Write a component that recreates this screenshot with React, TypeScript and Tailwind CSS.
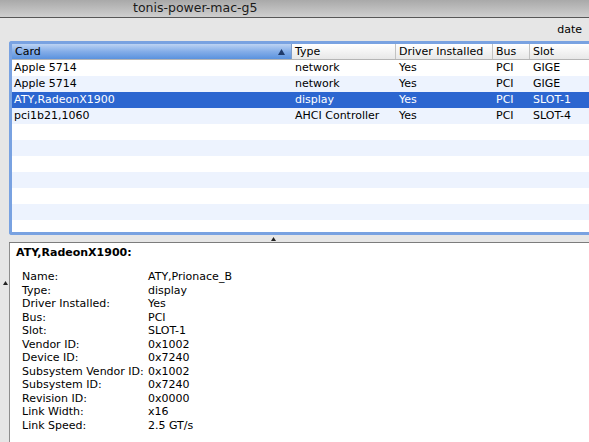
const rows = [
  { card: "Apple 5714", type: "network", drv: "Yes", bus: "PCI", slot: "GIGE" },
  { card: "Apple 5714", type: "network", drv: "Yes", bus: "PCI", slot: "GIGE" },
  { card: "ATY,RadeonX1900", type: "display", drv: "Yes", bus: "PCI", slot: "SLOT-1" },
  { card: "pci1b21,1060", type: "AHCI Controller", drv: "Yes", bus: "PCI", slot: "SLOT-4" },
];

const details: [string, string][] = [
  ["Name:", "ATY,Prionace_B"],
  ["Type:", "display"],
  ["Driver Installed:", "Yes"],
  ["Bus:", "PCI"],
  ["Slot:", "SLOT-1"],
  ["Vendor ID:", "0x1002"],
  ["Device ID:", "0x7240"],
  ["Subsystem Vendor ID:", "0x1002"],
  ["Subsystem ID:", "0x7240"],
  ["Revision ID:", "0x0000"],
  ["Link Width:", "x16"],
  ["Link Speed:", "2.5 GT/s"],
];

const cols = "grid grid-cols-[280px_104px_97px_37px_1fr]";

function Handle() {
  return (
    <svg width="5" height="5" viewBox="0 0 5 5">
      <path d="M0 5 L2.5 1 L5 5 Z" fill="#222" />
    </svg>
  );
}

export default function App() {
  return (
    <div className="w-[589px] h-[442px] overflow-hidden bg-[#e6e6e6] text-[11px] text-black font-['DejaVu_Sans',sans-serif] flex flex-col">
      {/* title bar */}
      <div className="h-[18px] shrink-0 bg-gradient-to-b from-[#a9a9a9] to-[#cfcfcf] border-b border-[#575757] pl-[133px] text-[12.5px] leading-[16px] text-[#1a1a1a]">
        tonis-power-mac-g5
      </div>
      {/* toolbar */}
      <div className="h-[23px] shrink-0 flex items-center justify-end pr-[7px] pt-[2px]">date</div>

      <div className="flex-1 flex min-h-0">
        <div className="w-[9px] shrink-0 flex flex-col">
          <div className="h-[239px]" />
          <div className="pl-[3px]"><Handle /></div>
        </div>
        <div className="flex-1 flex flex-col min-w-0">
          {/* table with focus ring */}
          <div className="h-[194px] shrink-0 border-[3px] border-r-0 border-[#79a2e1] rounded-tl-[3px] rounded-bl-[3px] bg-white overflow-hidden">
            <div className={`${cols} h-[16px] leading-[15px] border-b border-[#b5b5b5] bg-gradient-to-b from-white to-[#e8e8e8]`}>
              <div className="pl-[3px] pr-[6px] flex justify-between items-center bg-gradient-to-b from-[#bcd3f3] via-[#84ade8] to-[#5a92de] border-r border-[#7f9dc9]">
                <span>Card</span>
                <svg width="7" height="6" viewBox="0 0 7 6"><path d="M0 6 L3.5 0 L7 6 Z" fill="#1f3a6a" /></svg>
              </div>
              <div className="pl-[3px] border-r border-[#c2c2c2]">Type</div>
              <div className="pl-[3px] border-r border-[#c2c2c2]">Driver Installed</div>
              <div className="pl-[3px] border-r border-[#c2c2c2]">Bus</div>
              <div className="pl-[3px]">Slot</div>
            </div>
            {rows.map((r, i) => {
              const sel = i === 2;
              const bg = sel ? "bg-[#2c66d0] text-white" : i % 2 === 1 ? "bg-[#edf3fe]" : "bg-white";
              return (
                <div key={i} className={`${cols} h-[16px] leading-[16px] ${bg}`}>
                  <div className="pl-[2px]">{r.card}</div>
                  <div className="pl-[3px]">{r.type}</div>
                  <div className="pl-[3px]">{r.drv}</div>
                  <div className="pl-[3px]">{r.bus}</div>
                  <div className="pl-[3px]">{r.slot}</div>
                </div>
              );
            })}
            {[0, 1, 2, 3, 4, 5, 6].map((i) => (
              <div key={i} className={`h-[16px] ${i % 2 === 1 ? "bg-[#edf3fe]" : "bg-white"}`} />
            ))}
          </div>
          {/* splitter */}
          <div className="h-[8px] shrink-0 flex justify-center border-b border-[#7c7c7c] pr-[52px]">
            <div className="pt-[1px]"><Handle /></div>
          </div>
          {/* details */}
          <div className="flex-1 bg-white border-l border-[#8e8e8e] pl-[6px] pt-[3px]">
            <div className="font-bold leading-[14px]">ATY,RadeonX1900:</div>
            <div className="pl-[6px] pt-[10px] leading-[13.5px]">
              {details.map(([k, v]) => (
                <div key={k} className="flex">
                  <div className="w-[126px] shrink-0">{k}</div>
                  <div>{v}</div>
                </div>
              ))}
            </div>
          </div>
        </div>
      </div>
    </div>
  );
}
